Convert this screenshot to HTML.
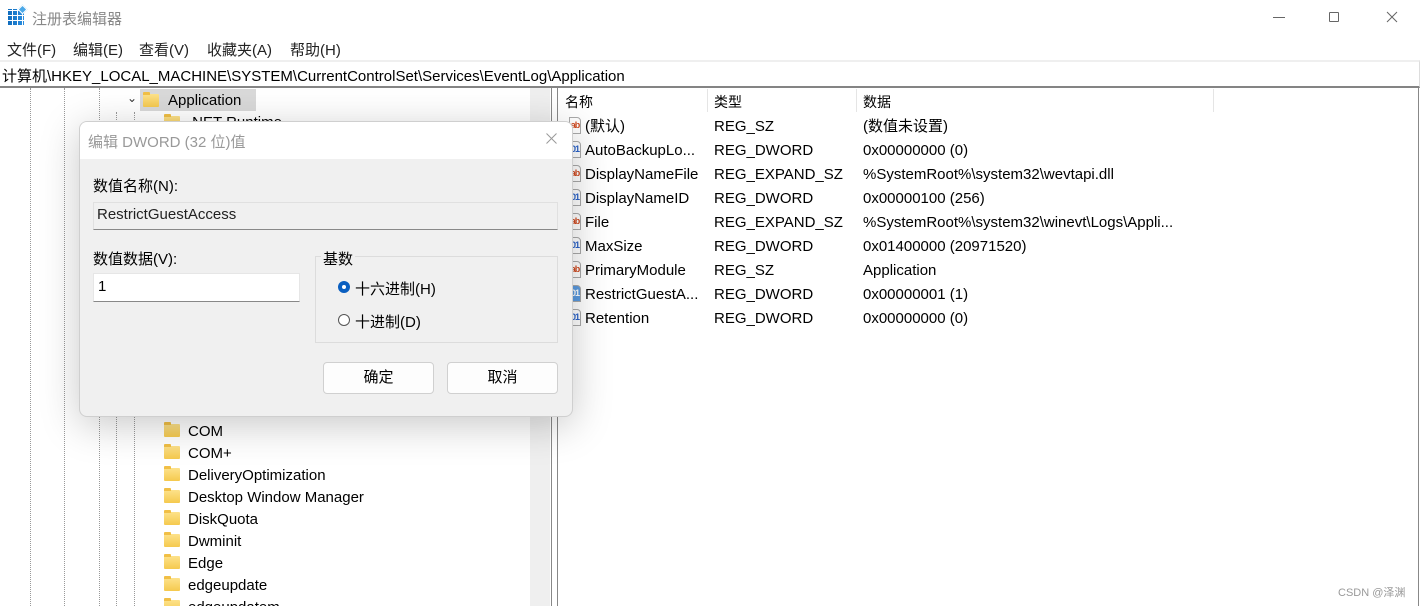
<!DOCTYPE html>
<html><head><meta charset="utf-8"><style>
*{margin:0;padding:0;box-sizing:border-box}
html,body{width:1420px;height:606px;overflow:hidden}
body{background:#fff;font-family:"Liberation Sans","Noto Sans CJK SC",sans-serif;color:#000;position:relative}
.a{position:absolute;white-space:nowrap}
.t{font-size:15px;line-height:22px}
.fold{position:absolute;width:16px;height:13px;background:linear-gradient(#fde28b,#f5c94e);border-radius:1px}
.fold:before{content:"";position:absolute;left:0;top:-2px;width:7px;height:3px;background:#f1bf45;border-radius:1px 1px 0 0}
.dv{position:absolute;border-left:1px dotted #999;top:88px;bottom:0}
.ic{position:absolute;width:12px;height:17px;background:#fff;border:1px solid #aaa;border-radius:0 4px 0 0;font-size:9px;font-weight:bold;line-height:14px;text-align:center;letter-spacing:-1px}
.r{color:#d04a20}.b{color:#2a62c8}
.btn{position:absolute;background:#fdfdfd;border:1px solid #d0d0d0;border-radius:4px;font-size:15px;text-align:center;line-height:30px;height:32px}
</style></head><body>
<div class="a" style="left:8px;top:9px;width:16px;height:16px;background:linear-gradient(90deg,#0f6cbd,#2b8ee0)"></div>
<div class="a" style="left:8px;top:9px;width:16px;height:16px;background:repeating-linear-gradient(90deg,transparent 0 4px,#fff 4px 5px),repeating-linear-gradient(0deg,transparent 0 4px,#fff 4px 5px)"></div>
<div class="a" style="left:19px;top:6px;width:7px;height:7px;background:#4aa8e8;transform:rotate(45deg);border:1px solid #fff"></div>
<div class="a" style="left:32px;top:8px;font-size:15px;color:#888">注册表编辑器</div>
<div class="a" style="left:1273px;top:17px;width:12px;border-top:1px solid #666"></div>
<div class="a" style="left:1329px;top:12px;width:10px;height:10px;border:1px solid #666;border-radius:1px"></div>
<svg class="a" style="left:1386px;top:11px" width="12" height="12"><path d="M1 1L11 11M11 1L1 11" stroke="#666" stroke-width="1"/></svg>
<div class="a" style="left:7px;top:39px;font-size:15px;color:#222">文件(F)</div>
<div class="a" style="left:73px;top:39px;font-size:15px;color:#222">编辑(E)</div>
<div class="a" style="left:139px;top:39px;font-size:15px;color:#222">查看(V)</div>
<div class="a" style="left:207px;top:39px;font-size:15px;color:#222">收藏夹(A)</div>
<div class="a" style="left:290px;top:39px;font-size:15px;color:#222">帮助(H)</div>
<div class="a" style="left:0;top:60px;width:1420px;height:28px;border-top:2px solid #efefef;border-bottom:2px solid #848484;border-right:1px solid #ddd"></div>
<div class="a" style="left:2px;top:65px;font-size:15px">计算机\HKEY_LOCAL_MACHINE\SYSTEM\CurrentControlSet\Services\EventLog\Application</div>
<div class="dv" style="left:30px"></div><div class="dv" style="left:64px"></div><div class="dv" style="left:99px"></div><div class="dv" style="left:116px;top:112px"></div><div class="dv" style="left:134px;top:112px"></div>
<div class="a" style="left:140px;top:89px;width:116px;height:22px;background:#d9d9d9"></div>
<div class="a" style="left:127px;top:91px;font-size:12px;color:#333">⌄</div>
<div class="fold" style="left:143px;top:94px"></div>
<div class="a t" style="left:168px;top:90px">Application</div>
<div class="fold" style="left:164px;top:116px"></div><div class="a t" style="left:188px;top:112px">.NET Runtime</div>
<div class="a" style="left:530px;top:88px;width:20px;height:518px;background:#efefef"></div>
<div class="a" style="left:551px;top:88px;width:7px;height:518px;border-left:1px solid #888;border-right:1px solid #888"></div>
<div class="fold" style="left:164px;top:424px"></div><div class="a t" style="left:188px;top:421px">COM</div>
<div class="fold" style="left:164px;top:446px"></div><div class="a t" style="left:188px;top:443px">COM+</div>
<div class="fold" style="left:164px;top:468px"></div><div class="a t" style="left:188px;top:465px">DeliveryOptimization</div>
<div class="fold" style="left:164px;top:490px"></div><div class="a t" style="left:188px;top:487px">Desktop Window Manager</div>
<div class="fold" style="left:164px;top:512px"></div><div class="a t" style="left:188px;top:509px">DiskQuota</div>
<div class="fold" style="left:164px;top:534px"></div><div class="a t" style="left:188px;top:531px">Dwminit</div>
<div class="fold" style="left:164px;top:556px"></div><div class="a t" style="left:188px;top:553px">Edge</div>
<div class="fold" style="left:164px;top:578px"></div><div class="a t" style="left:188px;top:575px">edgeupdate</div>
<div class="fold" style="left:164px;top:600px"></div><div class="a t" style="left:188px;top:597px">edgeupdatem</div>
<div class="a" style="left:1418px;top:88px;height:518px;border-left:1px solid #888"></div>
<div class="a" style="left:707px;top:89px;height:23px;border-left:1px solid #e5e5e5"></div>
<div class="a" style="left:856px;top:89px;height:23px;border-left:1px solid #e5e5e5"></div>
<div class="a" style="left:1213px;top:89px;height:23px;border-left:1px solid #e5e5e5"></div>
<div class="a" style="left:565px;top:92px;font-size:14px">名称</div>
<div class="a" style="left:714px;top:92px;font-size:14px">类型</div>
<div class="a" style="left:863px;top:92px;font-size:14px">数据</div>
<div class="ic r" style="left:569px;top:117px">ab</div><div class="a t" style="left:585px;top:116px">(默认)</div><div class="a t" style="left:714px;top:116px">REG_SZ</div><div class="a t" style="left:863px;top:116px">(数值未设置)</div>
<div class="ic b" style="left:569px;top:141px">01</div><div class="a t" style="left:585px;top:140px">AutoBackupLo...</div><div class="a t" style="left:714px;top:140px">REG_DWORD</div><div class="a t" style="left:863px;top:140px">0x00000000 (0)</div>
<div class="ic r" style="left:569px;top:165px">ab</div><div class="a t" style="left:585px;top:164px">DisplayNameFile</div><div class="a t" style="left:714px;top:164px">REG_EXPAND_SZ</div><div class="a t" style="left:863px;top:164px">%SystemRoot%\system32\wevtapi.dll</div>
<div class="ic b" style="left:569px;top:189px">01</div><div class="a t" style="left:585px;top:188px">DisplayNameID</div><div class="a t" style="left:714px;top:188px">REG_DWORD</div><div class="a t" style="left:863px;top:188px">0x00000100 (256)</div>
<div class="ic r" style="left:569px;top:213px">ab</div><div class="a t" style="left:585px;top:212px">File</div><div class="a t" style="left:714px;top:212px">REG_EXPAND_SZ</div><div class="a t" style="left:863px;top:212px">%SystemRoot%\system32\winevt\Logs\Appli...</div>
<div class="ic b" style="left:569px;top:237px">01</div><div class="a t" style="left:585px;top:236px">MaxSize</div><div class="a t" style="left:714px;top:236px">REG_DWORD</div><div class="a t" style="left:863px;top:236px">0x01400000 (20971520)</div>
<div class="ic r" style="left:569px;top:261px">ab</div><div class="a t" style="left:585px;top:260px">PrimaryModule</div><div class="a t" style="left:714px;top:260px">REG_SZ</div><div class="a t" style="left:863px;top:260px">Application</div>
<div class="ic b" style="left:569px;top:285px;background:#5b9be0;color:#fff">01</div><div class="a t" style="left:585px;top:284px">RestrictGuestA...</div><div class="a t" style="left:714px;top:284px">REG_DWORD</div><div class="a t" style="left:863px;top:284px">0x00000001 (1)</div>
<div class="ic b" style="left:569px;top:309px">01</div><div class="a t" style="left:585px;top:308px">Retention</div><div class="a t" style="left:714px;top:308px">REG_DWORD</div><div class="a t" style="left:863px;top:308px">0x00000000 (0)</div>
<div class="a" style="left:1338px;top:584px;font-size:11px;color:#999">CSDN @泽渊</div>
<div class="a" style="left:79px;top:121px;width:494px;height:296px;background:#f0f0f0;border:1px solid #cfcfcf;border-radius:8px;box-shadow:0 8px 40px rgba(0,0,0,.22);overflow:hidden">
<div style="position:absolute;left:0;top:0;width:100%;height:37px;background:#fff"></div>
</div>
<div class="a" style="left:88px;top:131px;font-size:15px;color:#999">编辑 DWORD (32 位)值</div>
<svg class="a" style="left:546px;top:133px" width="11" height="11"><path d="M0.5 0.5L10.5 10.5M10.5 0.5L0.5 10.5" stroke="#999" stroke-width="1"/></svg>
<div class="a" style="left:93px;top:175px;font-size:15px">数值名称(N):</div>
<div class="a" style="left:93px;top:202px;width:465px;height:28px;background:#f0f0f0;border:1px solid #e0e0e0;border-bottom:1px solid #888"></div>
<div class="a" style="left:97px;top:206px;font-size:15px;color:#222">RestrictGuestAccess</div>
<div class="a" style="left:93px;top:248px;font-size:15px">数值数据(V):</div>
<div class="a" style="left:93px;top:273px;width:207px;height:29px;background:#fff;border:1px solid #e6e6e6;border-bottom:1px solid #888"></div>
<div class="a" style="left:98px;top:278px;font-size:15px">1</div>
<div class="a" style="left:315px;top:256px;width:243px;height:87px;border:1px solid #dcdcdc"></div>
<div class="a" style="left:321px;top:248px;font-size:15px;background:#f0f0f0;padding:0 2px">基数</div>
<div class="a" style="left:338px;top:281px;width:12px;height:12px;border-radius:50%;background:#0a5fc0"></div>
<div class="a" style="left:342px;top:285px;width:4px;height:4px;border-radius:50%;background:#fff"></div>
<div class="a" style="left:355px;top:278px;font-size:15px">十六进制(H)</div>
<div class="a" style="left:338px;top:314px;width:12px;height:12px;border-radius:50%;border:1px solid #555;background:#fff"></div>
<div class="a" style="left:355px;top:311px;font-size:15px">十进制(D)</div>
<div class="btn" style="left:323px;top:362px;width:111px">确定</div>
<div class="btn" style="left:447px;top:362px;width:111px">取消</div>
</body></html>
